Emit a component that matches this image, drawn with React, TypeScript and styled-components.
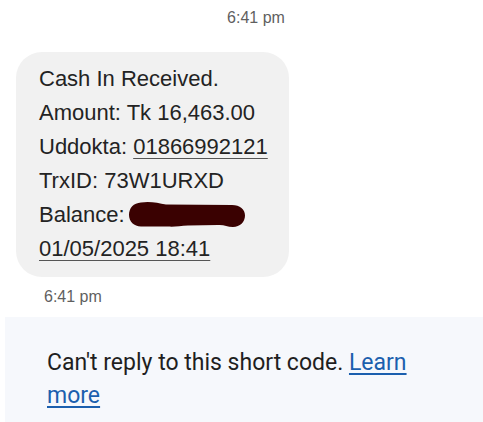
import styled, { createGlobalStyle } from "styled-components";

const GlobalStyle = createGlobalStyle`
  body {
    margin: 0;
    background: #ffffff;
    font-family: "Liberation Sans", Arial, sans-serif;
  }
`;

const Screen = styled.div`
  width: 483px;
  height: 422px;
  overflow: hidden;
  display: flex;
  flex-direction: column;
`;

const TimeStamp = styled.div<{ $align: "center" | "left" }>`
  font-size: 16px;
  line-height: 20px;
  color: #5f5f5f;
  text-align: ${(props) => props.$align};
  padding-left: ${(props) => (props.$align === "center" ? "29px" : "44px")};
`;

const Bubble = styled.div`
  width: 250px;
  margin: 24px 0 0 16px;
  padding: 10px 0 11px 23px;
  background: #f1f1f1;
  border-radius: 26px;
  color: #232323;
  font-size: 22px;
  line-height: 34px;
`;

const Line = styled.div`
  white-space: nowrap;
`;

const Underlined = styled.span`
  text-decoration: underline;
  text-decoration-thickness: 1px;
  text-underline-offset: 4px;
  text-decoration-color: #555;
`;

const Redacted = styled.svg`
  display: inline-block;
  vertical-align: -6px;
  margin-left: -3px;
`;

const Notice = styled.div`
  margin: 10px 0 0 5px;
  flex: 1;
  background: #f6f8fc;
  padding: 29px 0 0 42px;
`;

const NoticeText = styled.p`
  margin: 0;
  max-width: 390px;
  font-family: Roboto, "Noto Sans", sans-serif;
  font-size: 23px;
  line-height: 33px;
  color: #1f1f1f;
`;

const LearnMore = styled.a`
  color: #1b5fae;
  text-decoration: underline;
  text-decoration-thickness: 2px;
  text-underline-offset: 3px;
`;

const App = () => {
  return (
    <>
      <GlobalStyle />
      <Screen>
        <TimeStamp $align="center" style={{ marginTop: 8 }}>
          6:41 pm
        </TimeStamp>
        <Bubble>
          <Line>Cash In Received.</Line>
          <Line>Amount: Tk 16,463.00</Line>
          <Line>
            Uddokta: <Underlined>01866992121</Underlined>
          </Line>
          <Line>TrxID: 73W1URXD</Line>
          <Line>
            Balance:{" "}
            <Redacted width="118" height="27" viewBox="0 0 118 27">
              <path
                d="M13 1.5 C22 0 30 2 38 3.5 L104 4 C112 4 117 8.5 117 14.5 C117 21 112 26 105 26 C99 26 96 23.5 90 24 L60 24.5 C52 25 46 26 40 25.5 L13 25.5 C6 25.5 1 20.5 1 14 C1 7 5.5 2 13 1.5 Z"
                fill="#3a0101"
              />
            </Redacted>
          </Line>
          <Line>
            <Underlined>01/05/2025 18:41</Underlined>
          </Line>
        </Bubble>
        <TimeStamp $align="left" style={{ marginTop: 10 }}>
          6:41 pm
        </TimeStamp>
        <Notice>
          <NoticeText>
            Can't reply to this short code. <LearnMore href="#">Learn more</LearnMore>
          </NoticeText>
        </Notice>
      </Screen>
    </>
  );
};

export default App;
